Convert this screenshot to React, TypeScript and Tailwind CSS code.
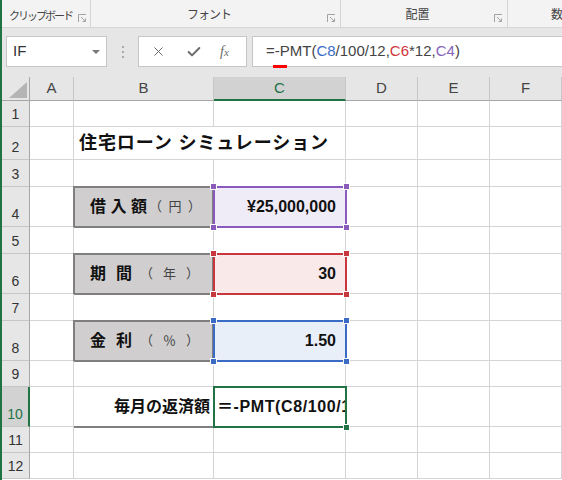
import { X, Check } from 'lucide-react'
import type { ReactNode } from 'react'

const HANDLE_POS = {
  tl: '-left-[5px] -top-[5px]',
  tr: '-right-[5px] -top-[5px]',
  bl: '-left-[5px] -bottom-[5px]',
  br: '-right-[5px] -bottom-[5px]',
}

function Launcher() {
  return (
    <svg width="9" height="9" viewBox="0 0 9 9" className="shrink-0">
      <path d="M0.5 8V0.5H8" fill="none" stroke="#a3a3a3" />
      <path d="M3 3L7.5 7.5M4.5 7.5H7.5V4.5" fill="none" stroke="#a3a3a3" />
    </svg>
  )
}

function Cell({ className = '', children }: { className?: string; children?: ReactNode }) {
  return <div className={`border-r border-b border-[#d4d4d4] ${className}`}>{children}</div>
}

function ColHead({ label, active }: { label: string; active?: boolean }) {
  return (
    <div
      className={`flex items-center justify-center border-r border-b border-r-[#c6c6c6] text-[15px] ${
        active
          ? 'border-b-2 border-b-[#217346] bg-[#d2d2d2] text-[#217346]'
          : 'border-b-[#a6a6a6] bg-[#e6e6e6] text-[#444]'
      }`}
    >
      {label}
    </div>
  )
}

function RowHead({ n, active }: { n: number; active?: boolean }) {
  return (
    <div
      className={`flex items-end justify-center border-b border-b-[#c6c6c6] pb-[3px] text-[14px] leading-[18px] ${
        active
          ? 'border-r-2 border-r-[#217346] bg-[#d2d2d2] text-[#217346]'
          : 'border-r border-r-[#a6a6a6] bg-[#e6e6e6] text-[#333]'
      }`}
    >
      {n}
    </div>
  )
}

function LabelBox({ children }: { children: ReactNode }) {
  return (
    <div className="-mt-px -mb-px -ml-px flex items-center border-2 border-[#7f7f7f] bg-[#d0cecf] pl-[15px] whitespace-nowrap text-[#111]">
      {children}
    </div>
  )
}

function RangeBox({ border, bg, handle, children }: { border: string; bg: string; handle: string; children: ReactNode }) {
  return (
    <div className={`relative -mx-px -mt-px -mb-px flex items-center justify-end border-2 pr-[9px] text-[16px] font-bold text-[#111] ${border} ${bg}`}>
      {children}
      {(['tl', 'tr', 'bl', 'br'] as const).map((p) => (
        <span key={p} className={`absolute h-[7px] w-[7px] border border-white ${handle} ${HANDLE_POS[p]}`} />
      ))}
    </div>
  )
}

function Plain({ n }: { n: number }) {
  return (
    <>
      {Array.from({ length: n }).map((_, i) => (
        <Cell key={i} />
      ))}
    </>
  )
}

export default function App() {
  return (
    <div className="h-[480px] w-[562px] overflow-hidden border-l-2 border-[#217346] bg-white font-['Liberation_Sans','Noto_Sans_CJK_JP',sans-serif]">
      {/* ribbon group labels */}
      <div className="flex h-[28px] border-b border-[#d6d6d6] bg-[#f3f3f3] text-[12px] whitespace-nowrap text-[#444]">
        <div className="flex w-[89px] shrink-0 items-end justify-between overflow-hidden border-r border-[#d6d6d6] pr-[3px] pb-[3px] pl-[7px]">
          <span className="text-[11px] tracking-[-2px]">クリップボード</span>
          <span className="mb-[1px]"><Launcher /></span>
        </div>
        <div className="flex w-[250px] shrink-0 items-end border-r border-[#d6d6d6] pr-[4px] pb-[3px]">
          <span className="flex-1 text-center tracking-[-1px]">フォント</span>
          <span className="mb-[1px]"><Launcher /></span>
        </div>
        <div className="flex w-[167px] shrink-0 items-end border-r border-[#d6d6d6] pr-[4px] pb-[3px]">
          <span className="flex-1 text-center">配置</span>
          <span className="mb-[1px]"><Launcher /></span>
        </div>
        <div className="flex shrink-0 items-end pb-[3px] pl-[43px]">数値</div>
      </div>

      {/* name box + formula bar */}
      <div className="flex h-[49px] items-start bg-[#e6e6e6] pt-[8px]">
        <div className="ml-[4px] flex h-[31px] w-[101px] items-center justify-between border border-[#c6c6c6] bg-white pr-[6px] pl-[6px] text-[15px] text-[#333]">
          <span>IF</span>
          <span className="h-0 w-0 border-x-[4px] border-t-[4px] border-x-transparent border-t-[#777]" />
        </div>
        <div className="flex h-[31px] w-[31px] flex-col items-center justify-center gap-[3px]">
          <span className="h-[2px] w-[2px] bg-[#aaa]" />
          <span className="h-[2px] w-[2px] bg-[#aaa]" />
          <span className="h-[2px] w-[2px] bg-[#aaa]" />
        </div>
        <div className="flex h-[31px] w-[109px] items-center border border-[#c6c6c6] bg-white text-[#6b6b6b]">
          <X size={15} strokeWidth={1.6} className="ml-[12px]" />
          <Check size={16} strokeWidth={3} className="ml-[20px]" />
          <span className="ml-[18px] font-['Liberation_Serif',serif] text-[14px] italic">
            f<span className="text-[11px]">x</span>
          </span>
        </div>
        <div className="relative ml-[5px] flex h-[31px] flex-1 items-center border border-r-0 border-[#c6c6c6] bg-white pl-[13px] text-[15px] text-[#444]">
          <span>=-PMT(</span>
          <span className="text-[#3a6cc6]">C8</span>
          <span>/100/12,</span>
          <span className="text-[#d0353b]">C6</span>
          <span>*12,</span>
          <span className="text-[#8662b8]">C4</span>
          <span>)</span>
          <span className="absolute top-[28px] left-[20px] h-[3px] w-[14px] bg-[#ff0000]" />
        </div>
      </div>

      {/* sheet */}
      <div className="grid grid-cols-[28px_44px_140px_132px_72px_72px_72px] grid-rows-[24px_26px_33px_27px_40px_27px_40px_27px_40px_26px_40px_26px_26px]">
        <div className="relative border-r border-b border-[#a6a6a6] bg-[#e6e6e6]">
          <svg width="18" height="16" viewBox="0 0 18 16" className="absolute right-[2px] bottom-[2px]">
            <path d="M18 0V16H0Z" fill="#b4b4b4" />
          </svg>
        </div>
        <ColHead label="A" />
        <ColHead label="B" />
        <ColHead label="C" active />
        <ColHead label="D" />
        <ColHead label="E" />
        <ColHead label="F" />

        {/* 1 */}
        <RowHead n={1} />
        <Plain n={6} />

        {/* 2 */}
        <RowHead n={2} />
        <Cell />
        <Cell className="col-span-2 flex items-center pl-[5px] text-[18px] font-bold tracking-[0.9px] whitespace-nowrap text-[#111]">
          住宅ローン シミュレーション
        </Cell>
        <Plain n={3} />

        {/* 3 */}
        <RowHead n={3} />
        <Plain n={6} />

        {/* 4 */}
        <RowHead n={4} />
        <Cell />
        <LabelBox>
          <span className="text-[16px] font-bold">借</span>
          <span className="ml-[4.5px] text-[16px] font-bold">入</span>
          <span className="ml-[4.5px] text-[16px] font-bold">額</span>
          <span className="ml-[2px] text-[13px] tracking-[6.5px] text-[#444]">（円）</span>
        </LabelBox>
        <RangeBox border="border-[#8a5bbd]" bg="bg-[#f0ecf7]" handle="bg-[#8a5bbd]">
          ¥25,000,000
        </RangeBox>
        <Plain n={3} />

        {/* 5 */}
        <RowHead n={5} />
        <Plain n={6} />

        {/* 6 */}
        <RowHead n={6} />
        <Cell />
        <LabelBox>
          <span className="text-[16px] font-bold">期</span>
          <span className="ml-[10px] text-[16px] font-bold">間</span>
          <span className="ml-[8px] text-[13px] tracking-[10px] text-[#444]">（年）</span>
        </LabelBox>
        <RangeBox border="border-[#c9373e]" bg="bg-[#f9e9e9]" handle="bg-[#c9373e]">
          30
        </RangeBox>
        <Plain n={3} />

        {/* 7 */}
        <RowHead n={7} />
        <Plain n={6} />

        {/* 8 */}
        <RowHead n={8} />
        <Cell />
        <LabelBox>
          <span className="text-[16px] font-bold">金</span>
          <span className="ml-[10px] text-[16px] font-bold">利</span>
          <span className="ml-[8px] text-[13px] tracking-[10px] text-[#444]">（％）</span>
        </LabelBox>
        <RangeBox border="border-[#3a6cc6]" bg="bg-[#e9eff9]" handle="bg-[#3a6cc6]">
          1.50
        </RangeBox>
        <Plain n={3} />

        {/* 9 */}
        <RowHead n={9} />
        <Plain n={6} />

        {/* 10 */}
        <RowHead n={10} active />
        <Cell />
        <div className="-mb-px flex items-center justify-end border-r border-b-2 border-r-[#d4d4d4] border-b-[#7f7f7f] pr-[3px] text-[16px] font-bold text-[#111]">
          毎月の返済額
        </div>
        <div className="relative -mx-px -mt-px -mb-px border-2 border-[#217346]">
          <div className="flex h-full items-center overflow-hidden pl-[2px] text-[16px] font-bold tracking-[0.6px] whitespace-nowrap text-[#111]">
            ＝-PMT(C8/100/12,C6*12,C4)
          </div>
          <span className="absolute -right-[5px] -bottom-[5px] h-[7px] w-[7px] border border-white bg-[#217346]" />
        </div>
        <Plain n={3} />

        {/* 11 */}
        <RowHead n={11} />
        <Plain n={6} />

        {/* 12 */}
        <RowHead n={12} />
        <Plain n={6} />
      </div>
    </div>
  )
}
